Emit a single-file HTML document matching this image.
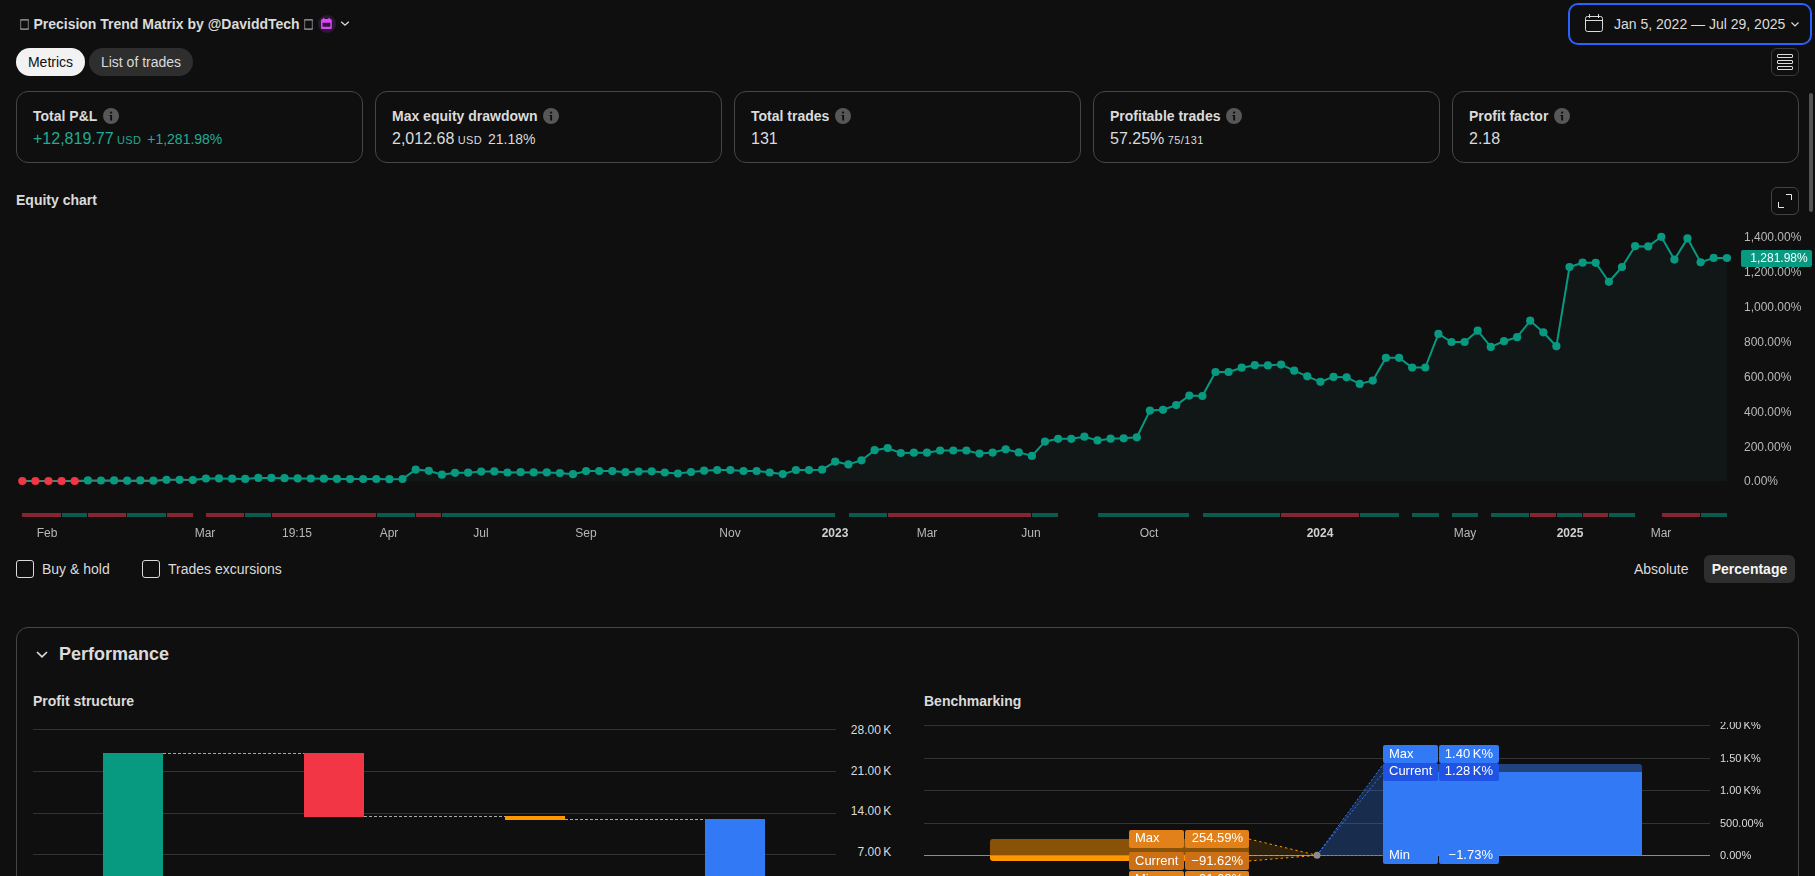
<!DOCTYPE html>
<html lang="en">
<head>
<meta charset="utf-8">
<title>Precision Trend Matrix by @DaviddTech</title>
<style>
*{box-sizing:border-box;margin:0;padding:0}
html,body{width:1815px;height:876px;overflow:hidden;background:#0f0f0f}
body{font-family:"Liberation Sans",sans-serif;color:#dbdbdb;position:relative;font-size:14px}
.abs{position:absolute;white-space:nowrap}
.b{font-weight:700}
.card{position:absolute;top:91px;width:347px;height:72px;border:1px solid #464646;border-radius:12px}
.card .lbl{position:absolute;left:16px;top:16px;font-weight:700;font-size:14px;line-height:16px;color:#dbdbdb;white-space:nowrap}
.card .val{position:absolute;left:16px;top:37px;font-size:16px;line-height:20px;white-space:nowrap}
.info{position:absolute;width:16px;height:16px}
.green{color:#22ab94}
.sm{font-size:11px;letter-spacing:.4px}
.pc{font-size:14px;margin-left:-2px}
.blab{will-change:transform;border-radius:2px;color:#fff;font-size:13px;line-height:18px}
.ax{will-change:transform;position:absolute;font-size:12px;line-height:14px;color:#b8b8b8;white-space:nowrap}
</style>
</head>
<body>
<!-- header -->
<svg class="abs" style="left:19.8px;top:18.8px" width="9" height="11" viewBox="0 0 9 11"><path d="M.4 .9H8.600M.4 10.100H8.600" stroke="#cfcfcf" stroke-width="1" fill="none"/><path d="M.7 .9V10.100M8.300 .9V10.100" stroke="#cfcfcf" stroke-width=".55" fill="none"/></svg>
<div class="abs b" style="left:33.4px;top:16px;line-height:16px;font-size:14px">Precision Trend Matrix by @DaviddTech</div>
<svg class="abs" style="left:304.4px;top:18.8px" width="9" height="11" viewBox="0 0 9 11"><path d="M.4 .9H8.600M.4 10.100H8.600" stroke="#cfcfcf" stroke-width="1" fill="none"/><path d="M.7 .9V10.100M8.300 .9V10.100" stroke="#cfcfcf" stroke-width=".55" fill="none"/></svg>
<div id="calbadge" class="abs" style="left:318px;top:15px;width:18px;height:18px;border-radius:50%;background:#2d1936"></div>
<svg class="abs" style="left:321.3px;top:18px" width="11" height="11.4" viewBox="0 0 11 11.4"><path fill-rule="evenodd" fill="#df43fc" d="M1.9 0h1.4v1.1h4V0h1.4v1.1h.6A1.5 1.5 0 0 1 10.8 2.6v7.1a1.5 1.5 0 0 1-1.5 1.5H1.5A1.5 1.5 0 0 1 0 9.700V2.6A1.5 1.5 0 0 1 1.500 1.1h.4zM1.500 4.800v4h7.800V4.800z"/></svg>
<svg class="abs" style="left:340px;top:20.4px" width="10" height="7" viewBox="0 0 10 7"><path d="M1.2 1.7 L5 5.2 L8.800 1.7" fill="none" stroke="#dbdbdb" stroke-width="1.3"/></svg>

<div class="abs" style="left:1568px;top:3px;width:243.500px;height:42px;border:2px solid #2962ff;border-radius:10px"></div>
<svg class="abs" style="left:1584px;top:13px" width="20" height="20" viewBox="0 0 20 20"><rect x="1.5" y="3.5" width="17" height="15" rx="2" fill="none" stroke="#dbdbdb" stroke-width="1"/><path d="M1.5 7.5H18.5M5.5 1v4M14.5 1v4" stroke="#dbdbdb" stroke-width="1" fill="none"/></svg>
<div class="abs" style="left:1614px;top:16px;line-height:16px;font-size:14px">Jan 5, 2022 — Jul 29, 2025</div>
<svg class="abs" style="left:1790px;top:21px" width="10" height="7" viewBox="0 0 10 7"><path d="M1.5 1.5 L5 5 L8.5 1.5" fill="none" stroke="#dbdbdb" stroke-width="1.2"/></svg>

<!-- tabs -->
<div class="abs" style="left:16px;top:48px;width:69px;height:28px;border-radius:14px;background:#f2f2f2;color:#0f0f0f;font-size:14px;line-height:28px;text-align:center">Metrics</div>
<div class="abs" style="left:89px;top:48px;width:104px;height:28px;border-radius:14px;background:#2e2e2e;color:#dbdbdb;font-size:14px;line-height:28px;text-align:center">List of trades</div>
<div class="abs" style="left:1771px;top:48px;width:28px;height:28px;border:1px solid #3d3d3d;border-radius:6px"></div>
<svg class="abs" style="left:1776px;top:53px" width="18" height="18" viewBox="0 0 18 18"><g fill="none" stroke="#dbdbdb" stroke-width="1"><rect x="1.5" y="1.5" width="15" height="3" rx=".5"/><rect x="1.5" y="7.5" width="15" height="3" rx=".5"/><rect x="1.5" y="13.5" width="15" height="3" rx=".5"/></g></svg>

<!-- cards -->
<div class="card" style="left:16px"><div class="lbl">Total P&amp;L</div><svg class="info" style="left:86px;top:16px" viewBox="0 0 16 16"><circle cx="8" cy="8" r="8" fill="#575757"/><circle cx="8.1" cy="4.6" r="1.15" fill="#0f0f0f"/><path d="M6.400 6.900h2.700v5.700H7.200V8.100h-.8z" fill="#0f0f0f"/></svg><div class="val green">+12,819.77<span class="sm"> USD</span><span class="pc">&nbsp; +1,281.98%</span></div></div>
<div class="card" style="left:375px"><div class="lbl">Max equity drawdown</div><svg class="info" style="left:167px;top:16px" viewBox="0 0 16 16"><circle cx="8" cy="8" r="8" fill="#575757"/><circle cx="8.1" cy="4.6" r="1.15" fill="#0f0f0f"/><path d="M6.400 6.900h2.700v5.700H7.200V8.100h-.8z" fill="#0f0f0f"/></svg><div class="val">2,012.68<span class="sm"> USD</span><span class="pc">&nbsp; 21.18%</span></div></div>
<div class="card" style="left:734px"><div class="lbl">Total trades</div><svg class="info" style="left:100px;top:16px" viewBox="0 0 16 16"><circle cx="8" cy="8" r="8" fill="#575757"/><circle cx="8.1" cy="4.6" r="1.15" fill="#0f0f0f"/><path d="M6.400 6.900h2.700v5.700H7.200V8.100h-.8z" fill="#0f0f0f"/></svg><div class="val">131</div></div>
<div class="card" style="left:1093px"><div class="lbl">Profitable trades</div><svg class="info" style="left:132px;top:16px" viewBox="0 0 16 16"><circle cx="8" cy="8" r="8" fill="#575757"/><circle cx="8.1" cy="4.6" r="1.15" fill="#0f0f0f"/><path d="M6.400 6.900h2.700v5.700H7.200V8.100h-.8z" fill="#0f0f0f"/></svg><div class="val">57.25%<span class="sm"> 75/131</span></div></div>
<div class="card" style="left:1452px"><div class="lbl">Profit factor</div><svg class="info" style="left:101px;top:16px" viewBox="0 0 16 16"><circle cx="8" cy="8" r="8" fill="#575757"/><circle cx="8.1" cy="4.6" r="1.15" fill="#0f0f0f"/><path d="M6.400 6.900h2.700v5.700H7.200V8.100h-.8z" fill="#0f0f0f"/></svg><div class="val">2.18</div></div>
<div class="abs" style="left:1809px;top:93px;width:4px;height:119px;border-radius:2px;background:#555"></div>

<!-- equity chart -->
<div class="abs b" style="left:16px;top:192px;line-height:16px;font-size:14px">Equity chart</div>
<div class="abs" style="left:1771px;top:187px;width:28px;height:28px;border:1px solid #434343;border-radius:6px"></div>
<svg class="abs" style="left:1776px;top:191px" width="18" height="18" viewBox="0 0 18 18"><path d="M10 3.5H15.500V9M2.500 11V16.500H8" fill="none" stroke="#e6e6e6" stroke-width="1"/></svg>
<svg class="abs" style="left:0;top:220px" width="1815" height="330" viewBox="0 220 1815 330">
<polygon points="22.3,480.9 22.3,481.0 35.4,481.0 48.5,481.0 61.6,481.0 74.7,481.0 87.9,480.4 101.0,480.5 114.1,480.4 127.2,480.7 140.3,480.4 153.4,480.7 166.5,479.8 179.6,479.8 192.8,480.1 205.9,478.5 219.0,478.4 232.1,478.7 245.2,478.9 258.3,477.9 271.4,477.9 284.5,478.2 297.7,478.4 310.8,478.5 323.9,478.7 337.0,478.9 350.1,479.0 363.2,479.0 376.3,479.0 389.4,479.2 402.5,479.0 415.7,469.6 428.8,470.8 441.9,474.7 455.0,472.8 468.1,472.7 481.2,471.6 494.3,471.4 507.4,472.5 520.6,472.2 533.7,472.4 546.8,472.4 559.9,473.1 573.0,474.2 586.1,471.1 599.2,471.1 612.3,471.1 625.5,472.2 638.6,471.6 651.7,471.3 664.8,472.5 677.9,473.5 691.0,472.1 704.1,470.7 717.2,470.1 730.3,470.1 743.5,471.0 756.6,471.0 769.7,472.5 782.8,474.1 795.9,470.1 809.0,470.1 822.1,469.7 835.2,461.6 848.4,464.4 861.5,460.3 874.6,450.2 887.7,448.1 900.8,453.0 913.9,452.7 927.0,452.7 940.1,450.5 953.3,450.5 966.4,450.5 979.5,453.6 992.6,452.6 1005.7,449.3 1018.8,452.4 1031.9,455.9 1045.0,441.6 1058.1,438.8 1071.3,438.8 1084.4,436.7 1097.5,440.4 1110.6,438.7 1123.7,438.3 1136.8,437.3 1149.9,410.6 1163.0,409.8 1176.2,405.1 1189.3,395.6 1202.4,396.0 1215.5,372.0 1228.6,372.0 1241.7,367.7 1254.8,365.2 1267.9,365.4 1281.1,364.6 1294.2,370.7 1307.3,376.3 1320.4,381.8 1333.5,376.9 1346.6,377.3 1359.7,383.9 1372.8,380.6 1385.9,357.8 1399.1,357.8 1412.2,367.6 1425.3,367.5 1438.4,333.9 1451.5,342.0 1464.6,342.0 1477.7,330.7 1490.8,346.9 1504.0,341.2 1517.1,337.2 1530.2,320.7 1543.3,332.3 1556.4,346.2 1569.5,267.0 1582.6,262.7 1595.7,262.8 1608.9,281.8 1622.0,267.0 1635.1,246.2 1648.2,246.4 1661.3,236.8 1674.4,259.6 1687.5,238.4 1700.6,262.3 1713.7,257.9 1726.9,258.0 1726.9,480.9" fill="#101716"/>
<polyline points="22.3,481.0 35.4,481.0 48.5,481.0 61.6,481.0 74.7,481.0 87.9,480.4 101.0,480.5 114.1,480.4 127.2,480.7 140.3,480.4 153.4,480.7 166.5,479.8 179.6,479.8 192.8,480.1 205.9,478.5 219.0,478.4 232.1,478.7 245.2,478.9 258.3,477.9 271.4,477.9 284.5,478.2 297.7,478.4 310.8,478.5 323.9,478.7 337.0,478.9 350.1,479.0 363.2,479.0 376.3,479.0 389.4,479.2 402.5,479.0 415.7,469.6 428.8,470.8 441.9,474.7 455.0,472.8 468.1,472.7 481.2,471.6 494.3,471.4 507.4,472.5 520.6,472.2 533.7,472.4 546.8,472.4 559.9,473.1 573.0,474.2 586.1,471.1 599.2,471.1 612.3,471.1 625.5,472.2 638.6,471.6 651.7,471.3 664.8,472.5 677.9,473.5 691.0,472.1 704.1,470.7 717.2,470.1 730.3,470.1 743.5,471.0 756.6,471.0 769.7,472.5 782.8,474.1 795.9,470.1 809.0,470.1 822.1,469.7 835.2,461.6 848.4,464.4 861.5,460.3 874.6,450.2 887.7,448.1 900.8,453.0 913.9,452.7 927.0,452.7 940.1,450.5 953.3,450.5 966.4,450.5 979.5,453.6 992.6,452.6 1005.7,449.3 1018.8,452.4 1031.9,455.9 1045.0,441.6 1058.1,438.8 1071.3,438.8 1084.4,436.7 1097.5,440.4 1110.6,438.7 1123.7,438.3 1136.8,437.3 1149.9,410.6 1163.0,409.8 1176.2,405.1 1189.3,395.6 1202.4,396.0 1215.5,372.0 1228.6,372.0 1241.7,367.7 1254.8,365.2 1267.9,365.4 1281.1,364.6 1294.2,370.7 1307.3,376.3 1320.4,381.8 1333.5,376.9 1346.6,377.3 1359.7,383.9 1372.8,380.6 1385.9,357.8 1399.1,357.8 1412.2,367.6 1425.3,367.5 1438.4,333.9 1451.5,342.0 1464.6,342.0 1477.7,330.7 1490.8,346.9 1504.0,341.2 1517.1,337.2 1530.2,320.7 1543.3,332.3 1556.4,346.2 1569.5,267.0 1582.6,262.7 1595.7,262.8 1608.9,281.8 1622.0,267.0 1635.1,246.2 1648.2,246.4 1661.3,236.8 1674.4,259.6 1687.5,238.4 1700.6,262.3 1713.7,257.9 1726.9,258.0" fill="none" stroke="#089981" stroke-width="2" stroke-linejoin="round"/>
<clipPath id="below"><rect x="0" y="480.8" width="1815" height="20"/></clipPath>
<polyline points="22.3,481.0 35.4,481.0 48.5,481.0 61.6,481.0 74.7,481.0 87.9,480.4 101.0,480.5 114.1,480.4 127.2,480.7 140.3,480.4 153.4,480.7 166.5,479.8 179.6,479.8 192.8,480.1 205.9,478.5 219.0,478.4" fill="none" stroke="#f23645" stroke-width="2" clip-path="url(#below)"/>
<circle cx="22.3" cy="481.0" r="4.1" fill="#f23645"/>
<circle cx="35.4" cy="481.0" r="4.1" fill="#f23645"/>
<circle cx="48.5" cy="481.0" r="4.1" fill="#f23645"/>
<circle cx="61.6" cy="481.0" r="4.1" fill="#f23645"/>
<circle cx="74.7" cy="481.0" r="4.1" fill="#f23645"/>
<circle cx="87.9" cy="480.4" r="4.1" fill="#089981"/>
<circle cx="101.0" cy="480.5" r="4.1" fill="#089981"/>
<circle cx="114.1" cy="480.4" r="4.1" fill="#089981"/>
<circle cx="127.2" cy="480.7" r="4.1" fill="#089981"/>
<circle cx="140.3" cy="480.4" r="4.1" fill="#089981"/>
<circle cx="153.4" cy="480.7" r="4.1" fill="#089981"/>
<circle cx="166.5" cy="479.8" r="4.1" fill="#089981"/>
<circle cx="179.6" cy="479.8" r="4.1" fill="#089981"/>
<circle cx="192.8" cy="480.1" r="4.1" fill="#089981"/>
<circle cx="205.9" cy="478.5" r="4.1" fill="#089981"/>
<circle cx="219.0" cy="478.4" r="4.1" fill="#089981"/>
<circle cx="232.1" cy="478.7" r="4.1" fill="#089981"/>
<circle cx="245.2" cy="478.9" r="4.1" fill="#089981"/>
<circle cx="258.3" cy="477.9" r="4.1" fill="#089981"/>
<circle cx="271.4" cy="477.9" r="4.1" fill="#089981"/>
<circle cx="284.5" cy="478.2" r="4.1" fill="#089981"/>
<circle cx="297.7" cy="478.4" r="4.1" fill="#089981"/>
<circle cx="310.8" cy="478.5" r="4.1" fill="#089981"/>
<circle cx="323.9" cy="478.7" r="4.1" fill="#089981"/>
<circle cx="337.0" cy="478.9" r="4.1" fill="#089981"/>
<circle cx="350.1" cy="479.0" r="4.1" fill="#089981"/>
<circle cx="363.2" cy="479.0" r="4.1" fill="#089981"/>
<circle cx="376.3" cy="479.0" r="4.1" fill="#089981"/>
<circle cx="389.4" cy="479.2" r="4.1" fill="#089981"/>
<circle cx="402.5" cy="479.0" r="4.1" fill="#089981"/>
<circle cx="415.7" cy="469.6" r="4.1" fill="#089981"/>
<circle cx="428.8" cy="470.8" r="4.1" fill="#089981"/>
<circle cx="441.9" cy="474.7" r="4.1" fill="#089981"/>
<circle cx="455.0" cy="472.8" r="4.1" fill="#089981"/>
<circle cx="468.1" cy="472.7" r="4.1" fill="#089981"/>
<circle cx="481.2" cy="471.6" r="4.1" fill="#089981"/>
<circle cx="494.3" cy="471.4" r="4.1" fill="#089981"/>
<circle cx="507.4" cy="472.5" r="4.1" fill="#089981"/>
<circle cx="520.6" cy="472.2" r="4.1" fill="#089981"/>
<circle cx="533.7" cy="472.4" r="4.1" fill="#089981"/>
<circle cx="546.8" cy="472.4" r="4.1" fill="#089981"/>
<circle cx="559.9" cy="473.1" r="4.1" fill="#089981"/>
<circle cx="573.0" cy="474.2" r="4.1" fill="#089981"/>
<circle cx="586.1" cy="471.1" r="4.1" fill="#089981"/>
<circle cx="599.2" cy="471.1" r="4.1" fill="#089981"/>
<circle cx="612.3" cy="471.1" r="4.1" fill="#089981"/>
<circle cx="625.5" cy="472.2" r="4.1" fill="#089981"/>
<circle cx="638.6" cy="471.6" r="4.1" fill="#089981"/>
<circle cx="651.7" cy="471.3" r="4.1" fill="#089981"/>
<circle cx="664.8" cy="472.5" r="4.1" fill="#089981"/>
<circle cx="677.9" cy="473.5" r="4.1" fill="#089981"/>
<circle cx="691.0" cy="472.1" r="4.1" fill="#089981"/>
<circle cx="704.1" cy="470.7" r="4.1" fill="#089981"/>
<circle cx="717.2" cy="470.1" r="4.1" fill="#089981"/>
<circle cx="730.3" cy="470.1" r="4.1" fill="#089981"/>
<circle cx="743.5" cy="471.0" r="4.1" fill="#089981"/>
<circle cx="756.6" cy="471.0" r="4.1" fill="#089981"/>
<circle cx="769.7" cy="472.5" r="4.1" fill="#089981"/>
<circle cx="782.8" cy="474.1" r="4.1" fill="#089981"/>
<circle cx="795.9" cy="470.1" r="4.1" fill="#089981"/>
<circle cx="809.0" cy="470.1" r="4.1" fill="#089981"/>
<circle cx="822.1" cy="469.7" r="4.1" fill="#089981"/>
<circle cx="835.2" cy="461.6" r="4.1" fill="#089981"/>
<circle cx="848.4" cy="464.4" r="4.1" fill="#089981"/>
<circle cx="861.5" cy="460.3" r="4.1" fill="#089981"/>
<circle cx="874.6" cy="450.2" r="4.1" fill="#089981"/>
<circle cx="887.7" cy="448.1" r="4.1" fill="#089981"/>
<circle cx="900.8" cy="453.0" r="4.1" fill="#089981"/>
<circle cx="913.9" cy="452.7" r="4.1" fill="#089981"/>
<circle cx="927.0" cy="452.7" r="4.1" fill="#089981"/>
<circle cx="940.1" cy="450.5" r="4.1" fill="#089981"/>
<circle cx="953.3" cy="450.5" r="4.1" fill="#089981"/>
<circle cx="966.4" cy="450.5" r="4.1" fill="#089981"/>
<circle cx="979.5" cy="453.6" r="4.1" fill="#089981"/>
<circle cx="992.6" cy="452.6" r="4.1" fill="#089981"/>
<circle cx="1005.7" cy="449.3" r="4.1" fill="#089981"/>
<circle cx="1018.8" cy="452.4" r="4.1" fill="#089981"/>
<circle cx="1031.9" cy="455.9" r="4.1" fill="#089981"/>
<circle cx="1045.0" cy="441.6" r="4.1" fill="#089981"/>
<circle cx="1058.1" cy="438.8" r="4.1" fill="#089981"/>
<circle cx="1071.3" cy="438.8" r="4.1" fill="#089981"/>
<circle cx="1084.4" cy="436.7" r="4.1" fill="#089981"/>
<circle cx="1097.5" cy="440.4" r="4.1" fill="#089981"/>
<circle cx="1110.6" cy="438.7" r="4.1" fill="#089981"/>
<circle cx="1123.7" cy="438.3" r="4.1" fill="#089981"/>
<circle cx="1136.8" cy="437.3" r="4.1" fill="#089981"/>
<circle cx="1149.9" cy="410.6" r="4.1" fill="#089981"/>
<circle cx="1163.0" cy="409.8" r="4.1" fill="#089981"/>
<circle cx="1176.2" cy="405.1" r="4.1" fill="#089981"/>
<circle cx="1189.3" cy="395.6" r="4.1" fill="#089981"/>
<circle cx="1202.4" cy="396.0" r="4.1" fill="#089981"/>
<circle cx="1215.5" cy="372.0" r="4.1" fill="#089981"/>
<circle cx="1228.6" cy="372.0" r="4.1" fill="#089981"/>
<circle cx="1241.7" cy="367.7" r="4.1" fill="#089981"/>
<circle cx="1254.8" cy="365.2" r="4.1" fill="#089981"/>
<circle cx="1267.9" cy="365.4" r="4.1" fill="#089981"/>
<circle cx="1281.1" cy="364.6" r="4.1" fill="#089981"/>
<circle cx="1294.2" cy="370.7" r="4.1" fill="#089981"/>
<circle cx="1307.3" cy="376.3" r="4.1" fill="#089981"/>
<circle cx="1320.4" cy="381.8" r="4.1" fill="#089981"/>
<circle cx="1333.5" cy="376.9" r="4.1" fill="#089981"/>
<circle cx="1346.6" cy="377.3" r="4.1" fill="#089981"/>
<circle cx="1359.7" cy="383.9" r="4.1" fill="#089981"/>
<circle cx="1372.8" cy="380.6" r="4.1" fill="#089981"/>
<circle cx="1385.9" cy="357.8" r="4.1" fill="#089981"/>
<circle cx="1399.1" cy="357.8" r="4.1" fill="#089981"/>
<circle cx="1412.2" cy="367.6" r="4.1" fill="#089981"/>
<circle cx="1425.3" cy="367.5" r="4.1" fill="#089981"/>
<circle cx="1438.4" cy="333.9" r="4.1" fill="#089981"/>
<circle cx="1451.5" cy="342.0" r="4.1" fill="#089981"/>
<circle cx="1464.6" cy="342.0" r="4.1" fill="#089981"/>
<circle cx="1477.7" cy="330.7" r="4.1" fill="#089981"/>
<circle cx="1490.8" cy="346.9" r="4.1" fill="#089981"/>
<circle cx="1504.0" cy="341.2" r="4.1" fill="#089981"/>
<circle cx="1517.1" cy="337.2" r="4.1" fill="#089981"/>
<circle cx="1530.2" cy="320.7" r="4.1" fill="#089981"/>
<circle cx="1543.3" cy="332.3" r="4.1" fill="#089981"/>
<circle cx="1556.4" cy="346.2" r="4.1" fill="#089981"/>
<circle cx="1569.5" cy="267.0" r="4.1" fill="#089981"/>
<circle cx="1582.6" cy="262.7" r="4.1" fill="#089981"/>
<circle cx="1595.7" cy="262.8" r="4.1" fill="#089981"/>
<circle cx="1608.9" cy="281.8" r="4.1" fill="#089981"/>
<circle cx="1622.0" cy="267.0" r="4.1" fill="#089981"/>
<circle cx="1635.1" cy="246.2" r="4.1" fill="#089981"/>
<circle cx="1648.2" cy="246.4" r="4.1" fill="#089981"/>
<circle cx="1661.3" cy="236.8" r="4.1" fill="#089981"/>
<circle cx="1674.4" cy="259.6" r="4.1" fill="#089981"/>
<circle cx="1687.5" cy="238.4" r="4.1" fill="#089981"/>
<circle cx="1700.6" cy="262.3" r="4.1" fill="#089981"/>
<circle cx="1713.7" cy="257.9" r="4.1" fill="#089981"/>
<circle cx="1726.9" cy="258.0" r="4.1" fill="#089981"/>
<rect x="22" y="513" width="39" height="4" fill="#872431"/>
<rect x="62" y="513" width="25" height="4" fill="#0b5a4e"/>
<rect x="88" y="513" width="38" height="4" fill="#872431"/>
<rect x="127" y="513" width="39" height="4" fill="#0b5a4e"/>
<rect x="167" y="513" width="26" height="4" fill="#872431"/>
<rect x="206" y="513" width="38" height="4" fill="#872431"/>
<rect x="245" y="513" width="26" height="4" fill="#0b5a4e"/>
<rect x="272" y="513" width="104" height="4" fill="#872431"/>
<rect x="377" y="513" width="38" height="4" fill="#0b5a4e"/>
<rect x="416" y="513" width="25" height="4" fill="#872431"/>
<rect x="442" y="513" width="393" height="4" fill="#0b5a4e"/>
<rect x="849" y="513" width="38" height="4" fill="#0b5a4e"/>
<rect x="888" y="513" width="143" height="4" fill="#872431"/>
<rect x="1032" y="513" width="26" height="4" fill="#0b5a4e"/>
<rect x="1098" y="513" width="91" height="4" fill="#0b5a4e"/>
<rect x="1203" y="513" width="77" height="4" fill="#0b5a4e"/>
<rect x="1281" y="513" width="78" height="4" fill="#872431"/>
<rect x="1360" y="513" width="39" height="4" fill="#0b5a4e"/>
<rect x="1412" y="513" width="27" height="4" fill="#0b5a4e"/>
<rect x="1452" y="513" width="26" height="4" fill="#0b5a4e"/>
<rect x="1491" y="513" width="38" height="4" fill="#0b5a4e"/>
<rect x="1530" y="513" width="26" height="4" fill="#872431"/>
<rect x="1557" y="513" width="25" height="4" fill="#0b5a4e"/>
<rect x="1583" y="513" width="25" height="4" fill="#872431"/>
<rect x="1609" y="513" width="26" height="4" fill="#0b5a4e"/>
<rect x="1662" y="513" width="38" height="4" fill="#872431"/>
<rect x="1701" y="513" width="26" height="4" fill="#0b5a4e"/>
</svg>
<div class="ax" style="left:7.3px;top:526px;width:80px;text-align:center">Feb</div>
<div class="ax" style="left:164.7px;top:526px;width:80px;text-align:center">Mar</div>
<div class="ax" style="left:256.5px;top:526px;width:80px;text-align:center">19:15</div>
<div class="ax" style="left:348.9px;top:526px;width:80px;text-align:center">Apr</div>
<div class="ax" style="left:440.7px;top:526px;width:80px;text-align:center">Jul</div>
<div class="ax" style="left:545.6px;top:526px;width:80px;text-align:center">Sep</div>
<div class="ax" style="left:689.8px;top:526px;width:80px;text-align:center">Nov</div>
<div class="ax" style="left:794.7px;top:526px;width:80px;text-align:center;font-weight:700;color:#d0d0d0">2023</div>
<div class="ax" style="left:886.5px;top:526px;width:80px;text-align:center">Mar</div>
<div class="ax" style="left:991.4px;top:526px;width:80px;text-align:center">Jun</div>
<div class="ax" style="left:1109.4px;top:526px;width:80px;text-align:center">Oct</div>
<div class="ax" style="left:1279.9px;top:526px;width:80px;text-align:center;font-weight:700;color:#d0d0d0">2024</div>
<div class="ax" style="left:1424.6px;top:526px;width:80px;text-align:center">May</div>
<div class="ax" style="left:1529.5px;top:526px;width:80px;text-align:center;font-weight:700;color:#d0d0d0">2025</div>
<div class="ax" style="left:1621.3px;top:526px;width:80px;text-align:center">Mar</div>
<div class="ax" style="left:1744px;top:230px">1,400.00%</div>
<div class="ax" style="left:1744px;top:265px">1,200.00%</div>
<div class="ax" style="left:1744px;top:300px">1,000.00%</div>
<div class="ax" style="left:1744px;top:335px">800.00%</div>
<div class="ax" style="left:1744px;top:370px">600.00%</div>
<div class="ax" style="left:1744px;top:405px">400.00%</div>
<div class="ax" style="left:1744px;top:440px">200.00%</div>
<div class="ax" style="left:1744px;top:474px">0.00%</div>
<div class="abs" style="will-change:transform;left:1741px;top:250px;width:71px;height:17px;border-radius:2px;background:#089981;color:#fff;font-size:12px;line-height:17px;padding-left:9.3px">1,281.98%</div>
<div class="abs" style="left:16px;top:560px;width:18px;height:18px;border:1px solid #dbdbdb;border-radius:3px"></div>
<div class="abs" style="left:42px;top:561px;line-height:16px;font-size:14px">Buy &amp; hold</div>
<div class="abs" style="left:142px;top:560px;width:18px;height:18px;border:1px solid #dbdbdb;border-radius:3px"></div>
<div class="abs" style="left:168px;top:561px;line-height:16px;font-size:14px">Trades excursions</div>
<div class="abs" style="left:1634px;top:561px;line-height:16px;font-size:14px">Absolute</div>
<div class="abs b" style="left:1704px;top:555px;width:91px;height:28px;border-radius:6px;background:#2e2e2e;color:#f5f5f5;line-height:28px;font-size:14px;text-align:center">Percentage</div>

<!-- performance -->
<div class="abs" style="left:16px;top:627px;width:1783px;height:300px;border:1px solid #464646;border-radius:12px"></div>
<svg class="abs" style="left:35px;top:649px" width="14" height="10" viewBox="0 0 14 10"><path d="M2 3 L7 7.800 L12 3" fill="none" stroke="#dbdbdb" stroke-width="1.7"/></svg>
<div class="abs b" style="left:59px;top:642px;line-height:24px;font-size:18px">Performance</div>
<div class="abs b" style="left:33px;top:693px;line-height:16px;font-size:14px">Profit structure</div>
<div class="abs b" style="left:924px;top:693px;line-height:16px;font-size:14px">Benchmarking</div>
<svg class="abs" style="left:0;top:715px" width="1815" height="161" viewBox="0 715 1815 161">
<line x1="33" y1="729.5" x2="836" y2="729.5" stroke="#333333" stroke-width="1"/>
<line x1="33" y1="771.5" x2="836" y2="771.5" stroke="#333333" stroke-width="1"/>
<line x1="33" y1="813.5" x2="836" y2="813.5" stroke="#333333" stroke-width="1"/>
<line x1="33" y1="854.5" x2="836" y2="854.5" stroke="#333333" stroke-width="1"/>
<rect x="103" y="753" width="60" height="130" fill="#089981"/>
<rect x="304" y="753" width="60" height="64" fill="#f23645"/>
<rect x="505" y="816" width="60" height="4" fill="#ff9800"/>
<rect x="705" y="819" width="60" height="60" fill="#3179f5"/>
<line x1="163" y1="753.5" x2="304" y2="753.5" stroke="#a8a8a8" stroke-width="1" stroke-dasharray="3 2"/>
<line x1="364" y1="816.5" x2="505" y2="816.5" stroke="#a8a8a8" stroke-width="1" stroke-dasharray="3 2"/>
<line x1="565" y1="819.5" x2="705" y2="819.5" stroke="#a8a8a8" stroke-width="1" stroke-dasharray="3 2"/>
<line x1="924" y1="725.5" x2="1710" y2="725.5" stroke="#333333" stroke-width="1"/>
<line x1="924" y1="758.5" x2="1710" y2="758.5" stroke="#333333" stroke-width="1"/>
<line x1="924" y1="790.5" x2="1710" y2="790.5" stroke="#333333" stroke-width="1"/>
<line x1="924" y1="823.5" x2="1710" y2="823.5" stroke="#333333" stroke-width="1"/>
<line x1="924" y1="855.5" x2="1710" y2="855.5" stroke="#8c8c8c" stroke-width="1"/>
<polygon points="1249,839 1317,855.2 1249,861" fill="rgba(255,152,0,.125)"/>
<path d="M993 839 H1249 V855.3 H990 V842 A3 3 0 0 1 993 839Z" fill="#8a5206"/>
<path d="M990 855.3 H1249 V861 H993 A3 3 0 0 1 990 858Z" fill="#ff9800"/>
<line x1="990" y1="855.5" x2="1130" y2="855.5" stroke="#8c8c8c" stroke-width="1"/>
<path d="M1249 839 L1317 855.3 M1249 861 L1317 855.3 M1249 855.5 L1317 855.5" stroke="#ff9800" stroke-width="1" stroke-dasharray="2.300 3" fill="none"/>
<polygon points="1317,855.2 1383,764.5 1383,855.4" fill="rgba(49,121,245,.28)"/>
<path d="M1383 764 H1639 A3 3 0 0 1 1642 767 V772 H1383Z" fill="#21427d"/>
<rect x="1383" y="772" width="259" height="83.3" fill="#3179f5"/>
<path d="M1317 855.2 L1383 764.5 M1317 855.2 L1383 773 M1317 855.5 L1383 855.5" stroke="#3179f5" stroke-width="1" stroke-dasharray="2 2" fill="none"/>
<circle cx="1317" cy="855.2" r="3.5" fill="#8c8c8c"/>
</svg>
<div class="ax" style="will-change:auto;left:811.3px;width:80px;text-align:right;top:723.2px;color:#dbdbdb">28.00 K</div>
<div class="ax" style="will-change:auto;left:811.3px;width:80px;text-align:right;top:764.4px;color:#dbdbdb">21.00 K</div>
<div class="ax" style="will-change:auto;left:811.3px;width:80px;text-align:right;top:804.4px;color:#dbdbdb">14.00 K</div>
<div class="ax" style="will-change:auto;left:811.3px;width:80px;text-align:right;top:845.2px;color:#dbdbdb">7.00 K</div>
<div class="abs" style="left:1715px;top:722px;width:90px;height:160px;overflow:hidden">
<div class="ax" style="left:5px;top:-4px;color:#dbdbdb;font-size:11px">2.00 K%</div>
<div class="ax" style="left:5px;top:29px;color:#dbdbdb;font-size:11px">1.50 K%</div>
<div class="ax" style="left:5px;top:61px;color:#dbdbdb;font-size:11px">1.00 K%</div>
<div class="ax" style="left:5px;top:94px;color:#dbdbdb;font-size:11px">500.00%</div>
<div class="ax" style="left:5px;top:126px;color:#dbdbdb;font-size:11px">0.00%</div>
</div>
<div class="abs blab" style="left:1129px;top:830px;width:55px;height:18px;background:#e2801a"><span style="position:absolute;left:6px;top:-1px">Max</span></div><div class="abs blab" style="left:1185px;top:830px;width:64px;height:18px;background:#e2801a"><span style="position:absolute;right:6px;top:-1px">254.59%</span></div>
<div class="abs blab" style="left:1129px;top:852px;width:55px;height:18px;background:#cc6f15"><span style="position:absolute;left:6px;top:0px">Current</span></div><div class="abs blab" style="left:1185px;top:852px;width:64px;height:18px;background:#cc6f15"><span style="position:absolute;right:6px;top:0px">−91.62%</span></div>
<div class="abs blab" style="left:1129px;top:871px;width:55px;height:18px;background:#e2801a"><span style="position:absolute;left:6px;top:-1px">Min</span></div><div class="abs blab" style="left:1185px;top:871px;width:64px;height:18px;background:#e2801a"><span style="position:absolute;right:6px;top:-1px">−91.68%</span></div>
<div class="abs blab" style="left:1383px;top:745px;width:55px;height:18px;background:#3179f5"><span style="position:absolute;left:6px;top:0px">Max</span></div><div class="abs blab" style="left:1439px;top:745px;width:60px;height:18px;background:#3179f5"><span style="position:absolute;right:6px;top:0px">1.40 K%</span></div>
<div class="abs blab" style="left:1383px;top:763px;width:55px;height:18px;background:#1e53e5"><span style="position:absolute;left:6px;top:-1px">Current</span></div><div class="abs blab" style="left:1439px;top:763px;width:60px;height:18px;background:#1e53e5"><span style="position:absolute;right:6px;top:-1px">1.28 K%</span></div>
<div class="abs blab" style="left:1383px;top:846px;width:55px;height:18px;background:#3179f5"><span style="position:absolute;left:6px;top:0px">Min</span></div><div class="abs blab" style="left:1439px;top:846px;width:60px;height:18px;background:#3179f5"><span style="position:absolute;right:6px;top:0px">−1.73%</span></div>
</body>
</html>
